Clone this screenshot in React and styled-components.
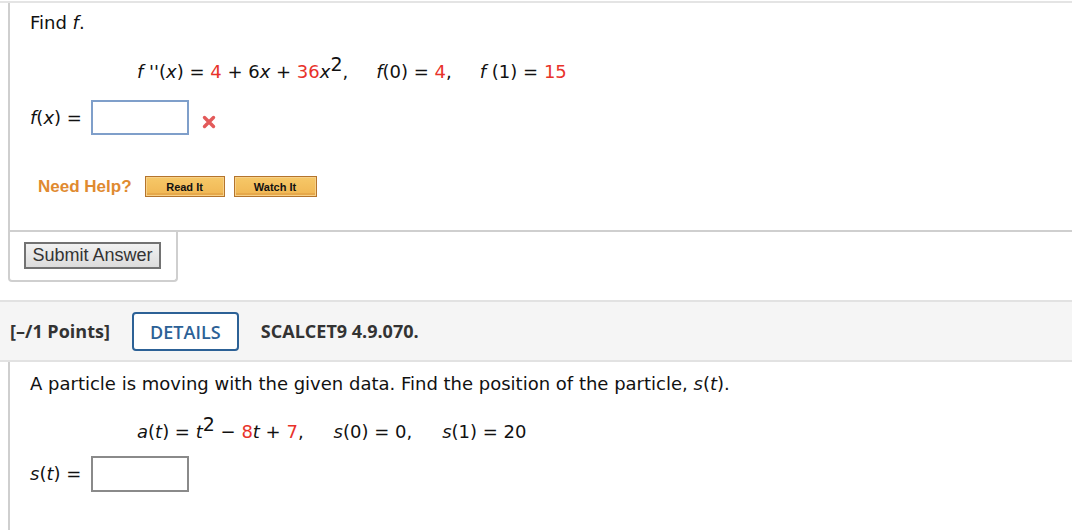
import React from "react";
import styled, { createGlobalStyle } from "styled-components";

const Global = createGlobalStyle`
  html, body { margin: 0; padding: 0; background: #fff; }
  body { font-family: "DejaVu Sans", Verdana, sans-serif; color: #111; }
`;

const Page = styled.div`
  width: 1072px;
  height: 530px;
  overflow: hidden;
  padding-top: 1px;
  box-sizing: border-box;
`;

const TopRule = styled.div`
  height: 2px;
  background: #e4e4e4;
`;

const Panel = styled.div`
  margin-left: 8px;
  border-left: 2px solid #cfcfcf;
  border-bottom: ${(p) => (p.$bottom ? "2px solid #cfcfcf" : "none")};
  padding-top: ${(p) => p.$pt || 0}px;
  padding-left: 20px;
  box-sizing: border-box;
  height: ${(p) => p.$h || "auto"};
`;

const Text = styled.div`
  font-size: 18px;
  line-height: 22px;
`;

const I = styled.i`
  font-style: italic;
`;

const Red = styled.span`
  color: #e8322a;
`;

const Eq = styled.div`
  font-size: 18px;
  line-height: 22px;
  margin-left: 107px;
  margin-top: ${(p) => p.$mt || 0}px;
  display: flex;
  white-space: pre;
`;

const Part = styled.span`
  margin-right: ${(p) => p.$gap || 0}px;
`;

const Sup = styled.sup`
  font-size: 19px;
  line-height: 0;
  vertical-align: 7px;
`;

const AnswerRow = styled.div`
  display: flex;
  align-items: center;
  margin-top: ${(p) => p.$mt || 0}px;
  font-size: 18px;
  line-height: 22px;
`;

const Label = styled.span`
  width: 61px;
  white-space: pre;
`;

const AnswerBox = styled.div`
  width: 98px;
  height: ${(p) => (p.$blue ? 35 : 36)}px;
  box-sizing: border-box;
  border: 2px solid ${(p) => (p.$blue ? "#7f9fca" : "#8a8a8a")};
  background: #fff;
`;

const XMark = styled.svg`
  margin-left: 13px;
  margin-top: 8px;
`;

const HelpRow = styled.div`
  display: flex;
  align-items: center;
  height: 21px;
  margin-left: 8px;
  margin-top: ${(p) => p.$mt || 0}px;
`;

const HelpLabel = styled.span`
  font-family: "Liberation Sans", Arial, sans-serif;
  font-weight: bold;
  font-size: 17px;
  color: #e08a30;
  margin-right: 13px;
`;

const HelpButton = styled.button`
  font-family: "Liberation Sans", Arial, sans-serif;
  font-weight: bold;
  font-size: 11px;
  color: #111;
  width: ${(p) => p.$w}px;
  height: 21px;
  margin-right: 9px;
  padding: 0;
  border: 1px solid #b4742c;
  box-shadow: inset 0 0 0 1px #f7d189, inset 0 -2px 0 1px #e6a84a;
  background: linear-gradient(#f6c868, #f0b653);
  cursor: pointer;
`;

const SubmitBox = styled.div`
  margin-left: 8px;
  width: 170px;
  height: 50px;
  box-sizing: border-box;
  border: 2px solid #cfcfcf;
  border-top: none;
  border-radius: 0 0 4px 4px;
  padding: 10px 0 0 14px;
`;

const SubmitButton = styled.button`
  font-family: "Liberation Sans", Arial, sans-serif;
  font-size: 18px;
  color: #333;
  width: 137px;
  height: 27px;
  padding: 0;
  border: 2px solid #727272;
  background: linear-gradient(#f1f1f1, #dcdcdc);
  cursor: pointer;
`;

const Header = styled.div`
  margin-top: 18px;
  height: 62px;
  box-sizing: border-box;
  background: #f5f5f5;
  border-top: 2px solid #e2e2e2;
  border-bottom: 2px solid #e2e2e2;
  display: flex;
  align-items: center;
  padding-left: 10px;
  font-family: "Open Sans", sans-serif;
  font-size: 18px;
  color: #333;
`;

const Points = styled.span`
  font-weight: bold;
`;

const DetailsButton = styled.button`
  margin-left: 22px;
  margin-right: 22px;
  width: 107px;
  height: 39px;
  box-sizing: border-box;
  border: 2px solid #2c6196;
  border-radius: 4px;
  background: #fff;
  font-family: "Open Sans", sans-serif;
  font-size: 18px;
  font-weight: 600;
  color: #2c6196;
  padding: 0;
  margin-top: 1px;
  cursor: pointer;
`;

const Code = styled.span`
  font-weight: bold;
`;

export default function App() {
  return (
    <Page>
      <Global />
      <TopRule />
      <Panel $bottom $h="229px" $pt={9}>
        <Text>
          Find <I>f</I>.
        </Text>
        <Eq $mt={27}>
          <Part $gap={28}>
            <I>f</I> ''(<I>x</I>) = <Red>4</Red> + 6<I>x</I> + <Red>36</Red>
            <I>x</I>
            <Sup>2</Sup>,
          </Part>
          <Part $gap={28}>
            <I>f</I>(0) = <Red>4</Red>,
          </Part>
          <Part>
            <I>f</I> (1) = <Red>15</Red>
          </Part>
        </Eq>
        <AnswerRow $mt={17}>
          <Label>
            <I>f</I>(<I>x</I>) =
          </Label>
          <AnswerBox $blue />
          <XMark width="14" height="14" viewBox="0 0 14 14">
            <path
              d="M2.5 2.5 L11.5 11.5 M11.5 2.5 L2.5 11.5"
              stroke="#e35a5a"
              strokeWidth="3.4"
              strokeLinecap="round"
            />
          </XMark>
        </AnswerRow>
        <HelpRow $mt={41}>
          <HelpLabel>Need Help?</HelpLabel>
          <HelpButton $w={80}>Read It</HelpButton>
          <HelpButton $w={83}>Watch It</HelpButton>
        </HelpRow>
      </Panel>
      <SubmitBox>
        <SubmitButton>Submit Answer</SubmitButton>
      </SubmitBox>
      <Header>
        <Points>[–/1 Points]</Points>
        <DetailsButton>DETAILS</DetailsButton>
        <Code>SCALCET9 4.9.070.</Code>
      </Header>
      <Panel $h="200px" $pt={11}>
        <Text>
          A particle is moving with the given data. Find the position of the
          particle, <I>s</I>(<I>t</I>).
        </Text>
        <Eq $mt={26}>
          <Part $gap={30}>
            <I>a</I>(<I>t</I>) = <I>t</I>
            <Sup>2</Sup> − <Red>8</Red>
            <I>t</I> + <Red>7</Red>,
          </Part>
          <Part $gap={30}>
            <I>s</I>(0) = 0,
          </Part>
          <Part>
            <I>s</I>(1) = 20
          </Part>
        </Eq>
        <AnswerRow $mt={13}>
          <Label>
            <I>s</I>(<I>t</I>) =
          </Label>
          <AnswerBox />
        </AnswerRow>
      </Panel>
    </Page>
  );
}
